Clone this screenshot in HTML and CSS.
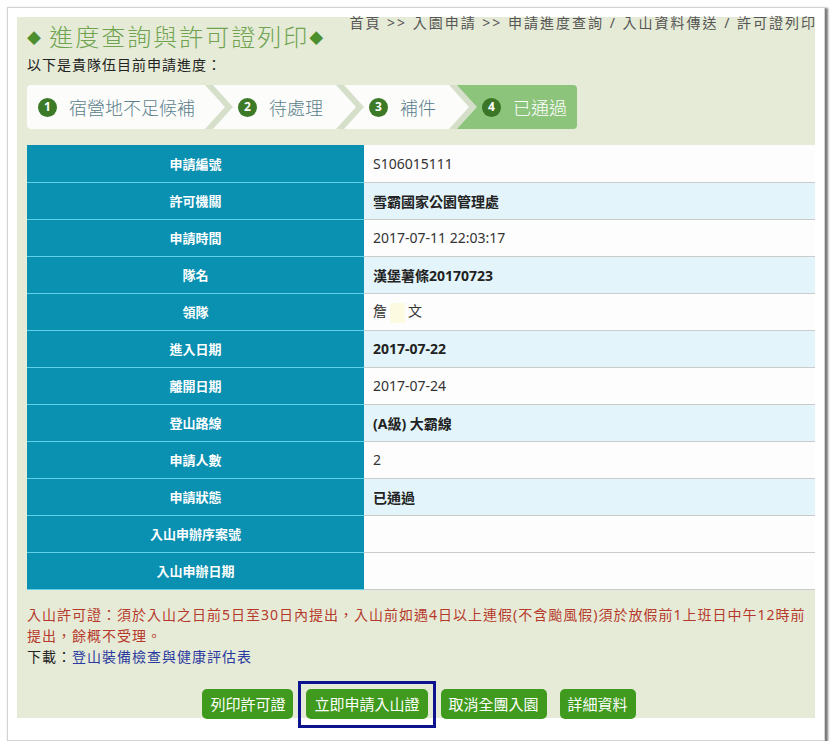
FILE: index.html
```html
<!DOCTYPE html>
<html lang="zh-Hant">
<head>
<meta charset="utf-8">
<title>進度查詢與許可證列印</title>
<link rel="stylesheet" href="styles.css">
</head>
<body>
<div class="frame">
  <div class="panel">
    <div class="header">
      <h1 class="title"><span class="dia">◆</span> 進度查詢與許可證列印<span class="dia">◆</span></h1>
      <div class="crumb">首頁 &gt;&gt; 入園申請 &gt;&gt; 申請進度查詢 / 入山資料傳送 / 許可證列印</div>
    </div>
    <p class="sub">以下是貴隊伍目前申請進度：</p>
    <ol class="steps">
      <li class="step"><span class="num">1</span><span class="label">宿營地不足候補</span></li>
      <li class="step mid"><span class="num">2</span><span class="label">待處理</span></li>
      <li class="step mid"><span class="num">3</span><span class="label">補件</span></li>
      <li class="step active"><span class="num">4</span><span class="label">已通過</span></li>
    </ol>
    <table class="info">
      <tr><th>申請編號</th><td>S106015111</td></tr>
      <tr class="alt"><th>許可機關</th><td>雪霸國家公園管理處</td></tr>
      <tr><th>申請時間</th><td>2017-07-11 22:03:17</td></tr>
      <tr class="alt"><th>隊名</th><td>漢堡薯條20170723</td></tr>
      <tr><th>領隊</th><td>詹<span class="mask"></span>文</td></tr>
      <tr class="alt"><th>進入日期</th><td>2017-07-22</td></tr>
      <tr><th>離開日期</th><td>2017-07-24</td></tr>
      <tr class="alt"><th>登山路線</th><td>(A級) 大霸線</td></tr>
      <tr><th>申請人數</th><td>2</td></tr>
      <tr class="alt"><th>申請狀態</th><td>已通過</td></tr>
      <tr><th>入山申辦序案號</th><td></td></tr>
      <tr><th>入山申辦日期</th><td></td></tr>
    </table>
    <div class="notes">
      <p class="warn">入山許可證：須於入山之日前5日至30日內提出，入山前如遇4日以上連假(不含颱風假)須於放假前1上班日中午12時前<br>提出，餘概不受理。</p>
      <p class="dl">下載：<a href="#">登山裝備檢查與健康評估表</a></p>
    </div>
    <div class="actions">
      <button class="btn">列印許可證</button>
      <button class="btn focus">立即申請入山證</button>
      <button class="btn">取消全團入園</button>
      <button class="btn">詳細資料</button>
    </div>
  </div>
</div>
</body>
</html>
```
FILE: styles.css
```css
* { box-sizing: border-box; }
html, body { margin: 0; padding: 0; background: #ffffff; }
body {
  font-family: "Noto Sans", "Noto Sans CJK TC", sans-serif;
  font-size: 14px;
  color: #222;
}
.frame {
  margin: 7px 0 0 7px;
  width: 818px;
  height: 734px;
  background: #fff;
  border: 1px solid #d4d4d4;
  box-shadow: 2px 2px 2px 1px #7a7a7a;
  padding: 9px 9px 0 9px;
}
.panel {
  background: #e6ebd7;
  height: 701px;
  padding: 0 0 0 10px;
}
.header {
  display: flex;
  justify-content: space-between;
  align-items: flex-start;
  height: 38px;
}
.title {
  margin: 0;
  font-size: 24px;
  line-height: 40px;
  font-weight: 300;
  color: #6fa34f;
  letter-spacing: 2px;
}
.dia {
  font-size: 14px;
  color: #4d8f2f;
  letter-spacing: 0;
  vertical-align: 3px;
}
.crumb {
  font-size: 14px;
  line-height: 12px;
  color: #555;
  letter-spacing: 2px;
  white-space: nowrap;
  margin-right: -2px;
}
.sub {
  margin: 0;
  line-height: 20px;
  font-size: 14px;
  letter-spacing: 1px;
  color: #222;
}
.steps {
  list-style: none;
  margin: 10px 0 0 0;
  padding: 0;
  display: flex;
  width: fit-content;
  height: 44px;
  background: #d6dfca;
  border-radius: 4px;
  overflow: hidden;
}
.step {
  display: flex;
  align-items: center;
  gap: 12px;
  background: #fcfdfb;
  color: #5a7d8b;
  font-size: 18px;
  font-weight: 300;
  padding: 0 30px 0 25px;
  margin-left: -12px;
  clip-path: polygon(0 0, calc(100% - 20px) 0, 100% 50%, calc(100% - 20px) 100%, 0 100%, 20px 50%);
}
.step.mid { padding-right: 33px; }
.step:first-child {
  margin-left: 0;
  padding-left: 11px;
  clip-path: polygon(0 0, calc(100% - 20px) 0, 100% 50%, calc(100% - 20px) 100%, 0 100%);
}
.step.active {
  background: #8cc47b;
  color: #fff;
  padding-right: 10px;
  clip-path: polygon(0 0, 100% 0, 100% 100%, 0 100%, 20px 50%);
}
.num {
  width: 19px;
  height: 19px;
  border-radius: 50%;
  background: #3d7a28;
  color: #fff;
  font-size: 12px;
  font-weight: bold;
  display: flex;
  align-items: center;
  justify-content: center;
  line-height: 1;
}
.step.active .num { background: #3b7526; }
.info {
  margin-top: 16px;
  width: 788px;
  border-collapse: collapse;
  table-layout: fixed;
}
.info th {
  width: 337px;
  height: 37px;
  background: #0a90b1;
  color: #fff;
  font-size: 13px;
  font-weight: bold;
  text-align: center;
  border-bottom: 1px solid #5fd0e8;
  padding: 0;
}
.info td {
  height: 37px;
  background: #fdfdfd;
  color: #333;
  font-size: 14px;
  padding: 0 0 0 9px;
  border-bottom: 1px solid #c9cccc;
}
.info tr.alt td {
  background: #e3f5fa;
  font-weight: bold;
  color: #222;
}
.mask {
  display: inline-block;
  width: 15px;
  height: 20px;
  background: #fdfae2;
  vertical-align: middle;
  margin: 0 3px;
}
.notes { margin-top: 14px; }
.notes p { margin: 0; line-height: 21px; font-size: 14px; letter-spacing: 1px; }
.warn { color: #b63a2c; }
.dl { color: #222; }
.dl a { color: #2b3aa0; text-decoration: none; }
.actions {
  margin-top: 22px;
  display: flex;
  justify-content: center;
  gap: 13px;
  padding-right: 4px;
}
.btn {
  position: relative;
  height: 30px;
  padding: 0 8px;
  border: 0;
  border-radius: 5px;
  background: #3f9a1d;
  color: #fff;
  font-family: "Noto Sans", "Noto Sans CJK TC", sans-serif;
  font-size: 15px;
  line-height: 30px;
}
.btn.focus::after {
  content: "";
  position: absolute;
  top: -8px;
  left: -8px;
  right: -8px;
  bottom: -9px;
  border: 3px solid #0e148f;
}
```
